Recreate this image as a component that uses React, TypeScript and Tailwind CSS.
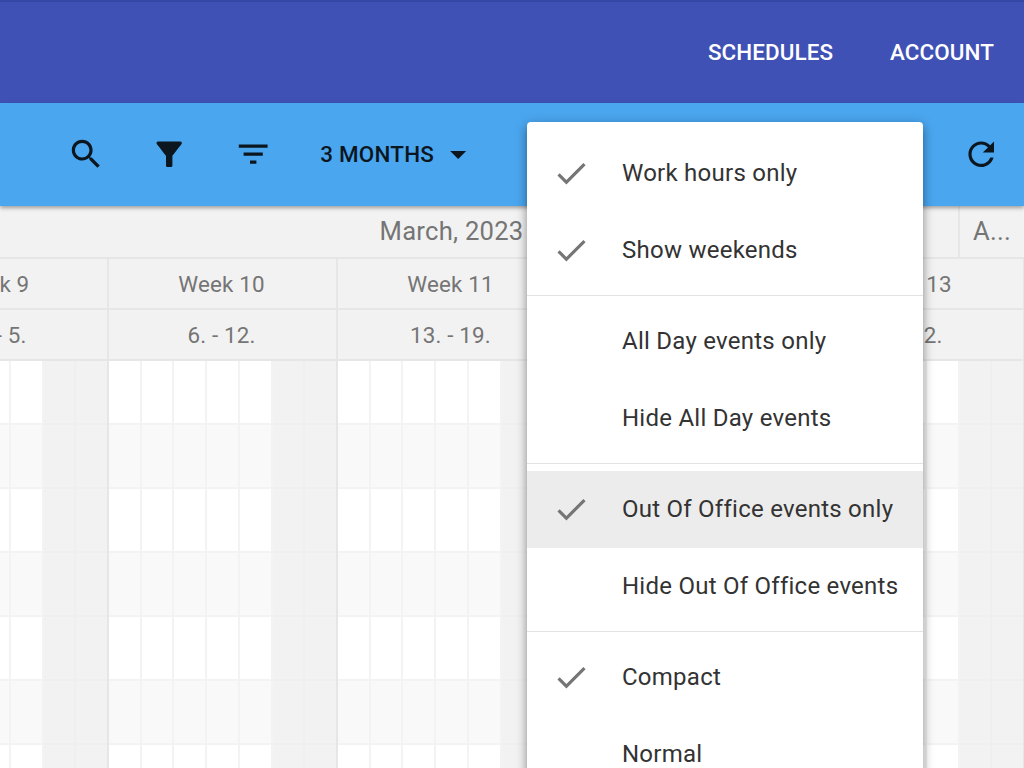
import React from 'react';

const Icon = ({ d, className }: { d: string; className?: string }) => (
  <svg viewBox="0 0 24 24" fill="currentColor" className={className}>
    <path d={d} />
  </svg>
);

const icons = {
  search:
    'M15.5 14h-.79l-.28-.27C15.41 12.59 16 11.11 16 9.5 16 5.91 13.09 3 9.5 3S3 5.91 3 9.5 5.91 16 9.5 16c1.61 0 3.09-.59 4.23-1.57l.27.28v.79l5 4.99L20.49 19l-4.99-5zm-6 0C7.01 14 5 11.99 5 9.5S7.01 5 9.5 5 14 7.01 14 9.5 11.99 14 9.5 14z',
  funnel:
    'M4.25 5.61C6.27 8.2 10 13 10 13v6c0 .55.45 1 1 1h2c.55 0 1-.45 1-1v-6s3.72-4.8 5.74-7.39c.51-.66.04-1.61-.79-1.61H5.04c-.83 0-1.3.95-.79 1.61z',
  filterList: 'M10 18h4v-2h-4v2zM3 6v2h18V6H3zm3 7h12v-2H6v2z',
  refresh:
    'M17.65 6.35C16.2 4.9 14.21 4 12 4c-4.42 0-7.99 3.58-7.99 8s3.57 8 7.99 8c3.73 0 6.84-2.55 7.73-6h-2.08c-.82 2.33-3.04 4-5.65 4-3.31 0-6-2.69-6-6s2.69-6 6-6c1.66 0 3.14.69 4.22 1.78L13 11h7V4l-2.35 2.35z',
  check: 'M9 16.2L4.8 12l-1.4 1.4L9 19 21 7l-1.4-1.4L9 16.2z',
  dropDown: 'M7 10l5 5 5-5z',
};

const weeks = [
  { name: 'Week 9', days: '27. - 5.' },
  { name: 'Week 10', days: '6. - 12.' },
  { name: 'Week 11', days: '13. - 19.' },
  { name: 'Week 12', days: '20. - 26.' },
  { name: 'Week 13', days: '27. - 2.' },
];

const menuGroups = [
  [
    { label: 'Work hours only', checked: true },
    { label: 'Show weekends', checked: true },
  ],
  [
    { label: 'All Day events only', checked: false },
    { label: 'Hide All Day events', checked: false },
  ],
  [
    { label: 'Out Of Office events only', checked: true, active: true },
    { label: 'Hide Out Of Office events', checked: false },
  ],
  [
    { label: 'Compact', checked: true },
    { label: 'Normal', checked: false },
  ],
];

const GridRow = ({ shaded }: { shaded: boolean }) => (
  <div className="ml-[-120px] flex h-16 w-[1145px] shrink-0">
    {weeks.map((week) => (
      <div key={week.name} className="flex w-[229px] shrink-0 border-r-2 border-[#e6e6e6]">
        {[0, 1, 2, 3, 4, 5, 6].map((day) => (
          <div
            key={day}
            className={`flex-1 border-b-2 border-r-2 last:border-r-0 ${
              day > 4
                ? 'border-[#efefef] bg-[#f2f2f2]'
                : shaded
                  ? 'border-[#f3f3f3] bg-[#f9f9f9]'
                  : 'border-[#f3f3f3] bg-white'
            }`}
          />
        ))}
      </div>
    ))}
  </div>
);

export default function App() {
  return (
    <div className="relative flex h-[768px] w-[1024px] flex-col overflow-hidden bg-white font-['Roboto',sans-serif]">
      <header className="flex h-[103px] shrink-0 items-center justify-end gap-[57px] border-t-2 border-[#3446a6] bg-[#4051b5] pr-[30px] text-[22.4px] font-medium tracking-[0.1px] text-white">
        <span>SCHEDULES</span>
        <span>ACCOUNT</span>
      </header>

      <div className="z-10 flex h-[103px] shrink-0 items-center bg-[#4aa6ef] pb-[1px] pl-[67px] pr-6 text-[#0b161f] shadow-[0_2px_4px_rgba(0,0,0,0.35)]">
        <Icon d={icons.search} className="size-[38.4px]" />
        <Icon d={icons.funnel} className="ml-[45px] size-[38.4px]" />
        <Icon d={icons.filterList} className="ml-[45px] size-[38.4px]" />
        <span className="ml-[48px] pt-[2px] text-[22.4px] font-medium tracking-[0.25px]">3 MONTHS</span>
        <Icon d={icons.dropDown} className="ml-[5px] size-[38.4px]" />
        <div className="flex-1" />
        <Icon d={icons.refresh} className="size-[38.4px]" />
      </div>

      <div className="flex h-[53px] shrink-0 border-b-2 border-[#e6e6e6] bg-[#f2f2f2] text-[25.6px] tracking-[0.25px] text-[#757575]">
        <div className="flex w-[960px] items-center justify-center border-r-2 border-[#e6e6e6] pr-[55px]">
          March, 2023
        </div>
        <div className="flex flex-1 items-center justify-center">A...</div>
      </div>

      {['name', 'days'].map((key) => (
        <div
          key={key}
          className="ml-[-120px] flex h-[51px] w-[1145px] shrink-0 bg-[#f2f2f2] text-[22.4px] tracking-[0.15px] text-[#757575]"
        >
          {weeks.map((week) => (
            <div
              key={week.name}
              className="flex w-[229px] shrink-0 items-center justify-center border-b-2 border-r-2 border-[#e6e6e6] pr-[2px] pt-[2px]"
            >
              {key === 'name' ? week.name : week.days}
            </div>
          ))}
        </div>
      ))}

      {[0, 1, 2, 3, 4, 5, 6].map((row) => (
        <GridRow key={row} shaded={row % 2 === 1} />
      ))}

      <div className="absolute left-[527px] top-[122px] z-20 w-[396px] rounded-[4px] bg-white py-[12.8px] shadow-[0_5px_8px_rgba(0,0,0,0.3),0_2px_14px_rgba(0,0,0,0.18)]">
        {menuGroups.map((group, i) => (
          <div key={i}>
            {i > 0 && <div className="my-[6.4px] h-[1.6px] bg-[#e2e2e2]" />}
            {group.map((item) => (
              <div
                key={item.label}
                className={`flex h-[76.8px] items-center whitespace-nowrap pl-[25px] text-[24px] tracking-[0.25px] text-[#333333] ${
                  'active' in item ? 'bg-[#ececec]' : ''
                }`}
              >
                <div className="w-[70px] shrink-0">
                  {item.checked && <Icon d={icons.check} className="size-[38.4px] text-[#757575]" />}
                </div>
                {item.label}
              </div>
            ))}
          </div>
        ))}
      </div>
    </div>
  );
}
